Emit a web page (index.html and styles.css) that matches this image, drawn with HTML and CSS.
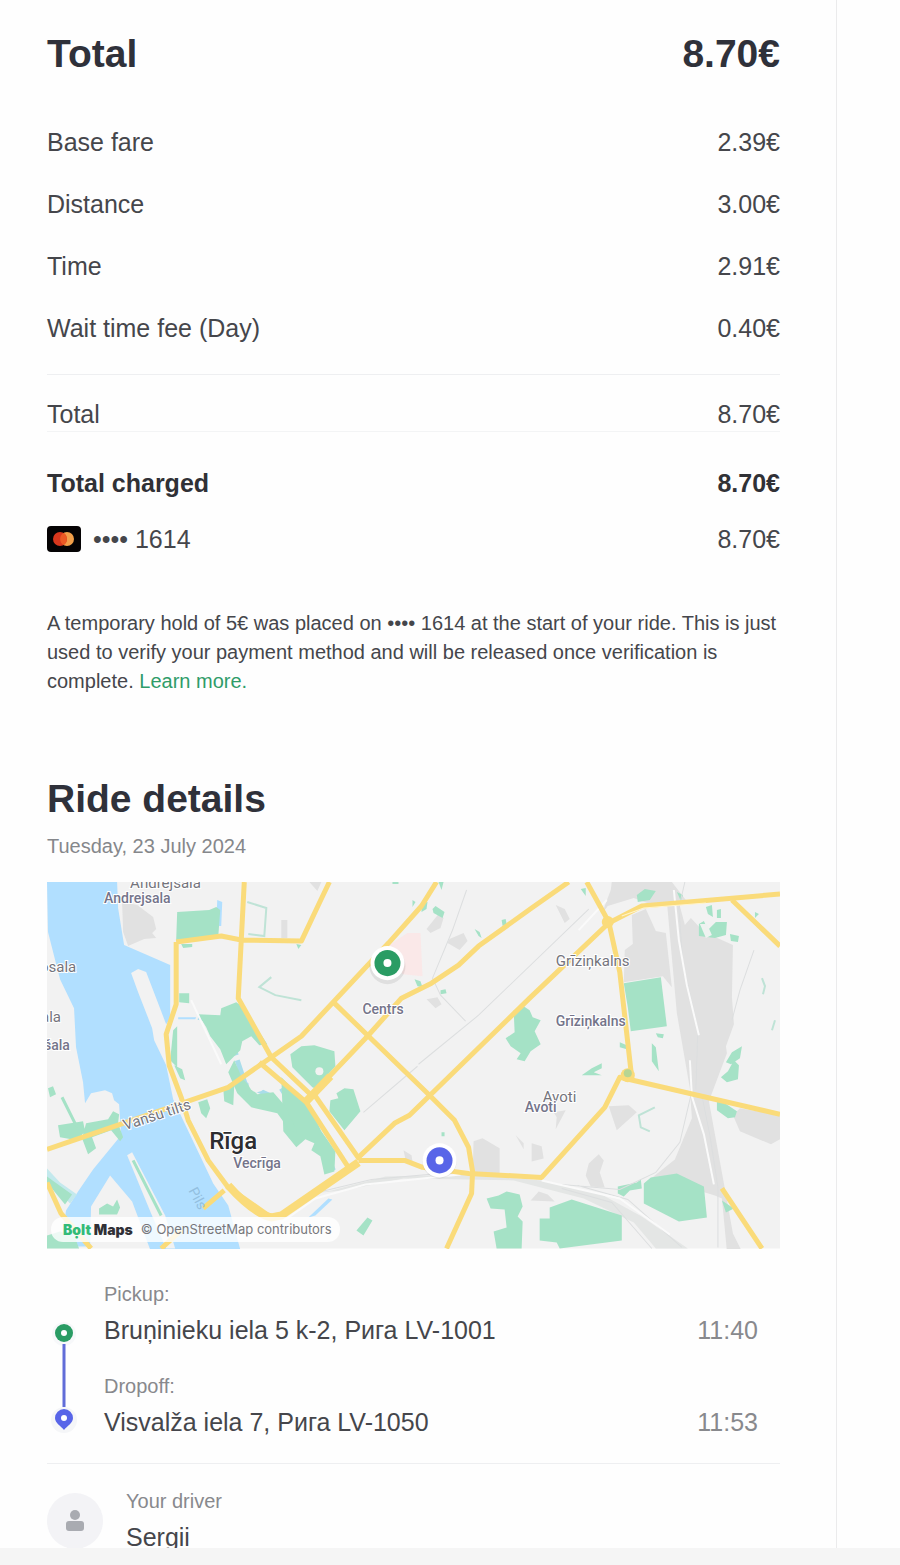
FILE: index.html
```html
<!DOCTYPE html>
<html lang="en">
<head>
    <meta charset="UTF-8">
    <meta name="viewport" content="width=device-width, initial-scale=1.0">
    <title>Ride receipt</title>
    <link rel="stylesheet" href="styles.css">
</head>
<body>
<main class="receipt">
    <header class="total-header">
        <h1>Total</h1>
        <span>8.70€</span>
    </header>

    <table class="fare">
        <tbody>
            <tr><th scope="row">Base fare</th><td>2.39€</td></tr>
            <tr><th scope="row">Distance</th><td>3.00€</td></tr>
            <tr><th scope="row">Time</th><td>2.91€</td></tr>
            <tr><th scope="row">Wait time fee (Day)</th><td>0.40€</td></tr>
        </tbody>
    </table>
    <div class="row subtotal"><span>Total</span><span>8.70€</span></div>
    <div class="row charged"><strong>Total charged</strong><strong>8.70€</strong></div>
    <div class="row">
        <span class="card">
            <svg class="card-logo" viewBox="0 0 34 26" aria-hidden="true">
                <rect width="34" height="26" rx="4" fill="#050304"/>
                <circle cx="20" cy="13" r="7" fill="#f3a04a"/>
                <circle cx="13" cy="13" r="7" fill="#d8371d"/>
                <path d="M16.500 7a7 7 0 0 1 0 12a7 7 0 0 1 0-12z" fill="#ec5a24"/>
            </svg>
            <span>•••• 1614</span>
        </span>
        <span>8.70€</span>
    </div>

    <p class="note">A temporary hold of 5€ was placed on •••• 1614 at the start of your ride. This is just used to verify your payment method and will be released once verification is complete. <a href="#">Learn more.</a></p>

    <h2>Ride details</h2>
    <p class="date">Tuesday, 23 July 2024</p>

    <div class="map">
        <svg viewBox="46 882 732 366" role="img" aria-label="Route map">
            <rect x="46" y="882" width="732" height="366" fill="#f2f2f2"/>

            <!-- rail yards and industrial areas -->
            <g fill="#e1e1e1">
                <path d="M121 902l15 3 16 12 3 12-4 4 4 5-12 1-16 7-5-14z"/>
                <path d="M610 882h60l14 18-36 4-16-6-26 8-6 8 9-24zM630 915l14-6 10 22 10 2 6 54-9-11-39 6 1-32 8-6z"/>
                <path d="M664 890l9-3 10 38 6-7 13 14 29 13-1 52 2 27-8 22 1 7-18 48 15 82 9 50 9 18h-15l-5-53-7-3-49-15-21 3 30-24 17-41-2-30-13-75z"/>
                <path d="M738 1108l40 7v24l-9 5-31-13-7-16zM607 1106l20-1 8 7-20 18zM587 1163l10-9 5 6-4 12 5 15-14-1-5-11zM530 1143l10 3 2 12-12 3zM552 1112l12-2-10 19 1-12zM554 905l9 4 5 10-5 4-6-12z"/>
                <path d="M472 1141l9-3 17 10v25h-27zM425 929l12-15 5 4-3 10-10 5zM448 939l14-6 4 8-8 9-12-7zM425 999l11-2 4 7-6 4zM402 1150l8 5 1 6-7-2zM514 1135l8 8v6zM308 882h12l-4 9zM280 920h6v18h-6zM529 1200l8-9 9 3 7 7z"/>
                <path d="M330 1190l54-14 86-2 70 6 60 14 40 22 46 32h-32l-22-26-50-24-70-18-110-2-60 12-33 3z" fill="#e4e6e5"/>
            </g>
            <path d="M388 945l18-12h13l2 43-20-2z" fill="#fae8e8"/>

            <!-- river and canals -->
            <g fill="#b1dfff">
                <path d="M46 882h70l1 26 6 37 46 20v53l-4 6-20-52-8-3-7 4 7 19 14 36 2 12 12 25 7 34 40 84 15 22 12 44h-90l-18-48-22-26-19 31-1 40H60l5-36 12-19 15-22 28-34-2-31-5-4-2-7-7-3-14 3-6 10-2-21-7-35-2-39-14-29-12-47z"/>
                <path d="M46 1168l13 14 17 12-7 9-14-15-9-8z" fill="#c3e9ed"/>
                <path d="M216 900l5 2-1 24h-5zM177 1017h18l-1 2h-17z"/>
            </g>
            <path d="M197 1017l18 4 15 19 5 15M236 1060l8 24 26 12M280 1088l18 28 22 26 12 28" fill="none" stroke="#a9ddea" stroke-width="5"/>
            <path d="M307 1217l20-19 4 1-17 16z" fill="#b1dfff"/>

            <!-- parks -->
            <g fill="#a5e2c6">
                <path d="M176 912l32-2 7-3 4 3-2 27-42 3zM180 944h11v3l-9 1zM178 993h10v10l-10-1z"/>
                <path d="M197 1014l22 1 1-7 15-6 7 5 24 37-8 1-8-9-9 5-2 9-14 14-6-15-10-13-4-9z"/>
                <path d="M289 1054l11-8 13-1 20 6 1 15-9 10-7 14-7-3-20-20z"/>
                <path d="M335 1093l8-5 9 1 7 22-16 19-15-19 1-11 8-2zM280 1077l18 18 14 19 8 17 14 20-1 20-10 3-4-18-9-6 3-7-9-4-9 8-13-16z"/>
                <path d="M233 1060l8 18 15 16 16-2 12 14 12 26-7-1-13-18-26-6-14-14-9-21zM222 1088l11-3-1 20-9-4zM197 1102l9-3 3 9-4 10-5-5z"/>
                <path d="M172 1030l4-4v41l-7-7zM173 1065l8 4 3 11-5-2z"/>
                <path d="M512 1010l10-4 6 4 3 7 8 3-6 11 6 13-10 7-6 10-8-2 4-6-10-7-5-8 9-6z"/>
                <path d="M622 983l37-6 6 49-36 5-3-24zM642 1183l7-6 26-4 27 13 3 31-28 4-35-18zM548 1207l22-8 50 16v25l-62 8-3-6-17-2v-22h10z"/>
                <path d="M485 1198l12-3 8-4 13 3 3 12-5 10 5 5-1 27h-25l-3-17 13-4-2-18-14-1zM355 1230l11-13 5 3-9 15z"/>
                <path d="M580 1075l10-7 10-5v5l-8 4 8 3zM431 909l3-3 9 6-2 6-9-5zM413 979l6 2 2 6-5-1zM420 903l6-1-1 7-5 3zM439 990l5-1 1 4-6 1zM473 929l5 3 2 6-3-2zM500 920l4-1 1 5-4 2z"/>
                <path d="M697 924l5-3 4 9 8-8h11l-1 13-11 3-16-2zM704 907l6-2 1 12-5-3zM715 910l4-1v9h-4zM635 895l8-6 11 2-6 9-12 2zM579 889l5-1v8zM728 934l9 2-1 6-7-1zM675 892l6 3-2 6zM753 912l4 2-4 4z"/>
                <path d="M616 1186l19-4 4-3 1 9-12 2-6 6-6-3zM715 1101l8 2 12 8-2 6-7 1-11-8zM732 1060l5 5-1 14-11 3-6-5 7-6zM720 1200l12 8-8 4zM724 1062l6-10 10-6-2 12-9 6zM654 1033l8 1-1 4-5-1zM618 1042l7 3v4l-7-2zM650 1043l4 4 3 24-7-10z"/>
                <path d="M57 1125l25-4 2 10-8 9-17-3zM85 1123l22-4 5-8 6 3-1 9 5 14-3 4-9-11-19 7 4 11-8 6-6-16zM47 1088l5-2 3 8-6 3zM46 1176l25 18-7 10-18-22zM98 1208l8-5 6 3 4-7 3 8-3 7H98zM46 1235l13-4 15 6 4 11H46z"/>
                <path d="M437 882h5l-2 8zM391 882h6v2h-6zM411 900l3 2-3 5zM295 944l5 1-3 4zM440 1132h3v4h-3z"/>
            </g>
            <path d="M126 1155l5-3 33 63 10 33h-9l-15-35z" fill="#f2f2f2"/>
            <path d="M132 1160l28 55M61 1097l15 30" fill="none" stroke="#a5e2c6" stroke-width="3"/>
            <circle cx="318" cy="1071" r="4" fill="#f2f2f2"/>
            <ellipse cx="256" cy="1082" rx="9" ry="10" fill="#f2f2f2"/>
            <path d="M698 924l7 0 5 11-6 3z" fill="#eef2f0"/>

            <!-- rails and footpaths -->
            <g fill="none" stroke="#dcdedf" stroke-width="1">
                <path d="M465 890l-14 40-20 48 8 17 25 26M417 1064l60-49 110-106M362 1112l54-46"/>
                <path d="M280 1213l40-22 50-12 90-8M560 1188l50 14 40 46M576 1185l50 14 54 48M560 1184l58 5 36-17 24-30 11-47M700 1095l8 40 8 52v60"/>
                <path d="M752 950l-14 40-8 30M683 882l-6 26 4 55 15 66-2 60"/>
            </g>
            <g fill="none" stroke="#fafafa" stroke-width="2">
                <path d="M280 1222l34-24 50-14 95-10M540 1180l78 18 50 36M688 1060l2 36 12 38 10 50M672 890l5 50 8 45 12 50M605 900l-28 30M190 1000l30 64"/>
            </g>
            <path d="M270 977l-12 10 16 8 26 5M246 902l19 6-2 28-16-2M653 1107l-16 8 2 12 9 4M760 978l3 8-2 8M773 1020l-3 10" fill="none" stroke="#bfe3d6" stroke-width="2"/>

            <!-- main streets -->
            <g fill="none" stroke="#fadb7a" stroke-width="5" stroke-linejoin="round">
                <path d="M175 942v62l-10 30 3 31 12 32 7 23 20 40 20 27 43 30M175 942l45-6 20 4 60 1 17-36 11-23M243 882l-6 116 33 59 40 38"/>
                <path d="M46 1149l181-62 43-30 30-21 87-93 33-37 15-24M567 882l-37 26-53 38-20 19-27 18-30 15-33 37-57 60"/>
                <path d="M333 1003l95 92 25 25 14 27 4 24-1 22-25 55M357 1157l36-34 15-8 120-117 79-75 33-17 138-12M585 882l22 40 11 50 12 106"/>
                <path d="M258 1062l47 40 42 65M312 1093l46 66M357 1160h46l18 7 46 6 73 4 63-70 15-30 160 37M730 900l48 46M720 1188l40 60M46 1182l14 31 30 35M223 1190l-21 18M160 1248l20-18"/>
            </g>
            <path d="M227 1185q25 28 43 32l10-2 77-53" fill="none" stroke="#fadb7a" stroke-width="8"/>
            <path d="M305 1101l24-25" fill="none" stroke="#fadb7a" stroke-width="8"/>
            <circle cx="626" cy="1075" r="7" fill="#fadb7a"/>
            <circle cx="626" cy="1073" r="4" fill="#b7d592"/>
            <circle cx="606" cy="922" r="6" fill="#fadb7a"/>
            <path d="M620 916l22-8 62-5" fill="none" stroke="#fff4cc" stroke-width="1"/>

            <!-- place names -->
            <g class="map-label">
                <text x="129" y="888">Andrejsala</text>
                <text x="554" y="966">Grīziņkalns</text>
                <text x="39" y="972">osala</text>
                <text x="40" y="1022">ala</text>
                <text x="541" y="1102">Avoti</text>
            </g>
            <g class="map-label strong">
                <text x="103" y="903">Andrejsala</text>
                <text x="554" y="1026">Grīziņkalns</text>
                <text x="361" y="1014">Centrs</text>
                <text x="43" y="1050">šala</text>
                <text x="523" y="1112">Avoti</text>
                <text x="232" y="1168">Vecrīga</text>
            </g>
            <text class="map-label" transform="translate(124 1130) rotate(-18)">Vanšu tilts</text>
            <text class="map-water" transform="translate(187 1190) rotate(62)">Pils</text>
            <text class="map-city" x="208" y="1149">Rīga</text>

            <!-- pickup and dropoff markers -->
            <circle cx="386" cy="966" r="18" fill="#000" opacity=".08"/>
            <circle cx="386" cy="963" r="17" fill="#fff"/>
            <circle cx="386" cy="963" r="13" fill="#2a9c64"/>
            <circle cx="386" cy="963" r="4" fill="#fff"/>
            <circle cx="438" cy="1161" r="17" fill="#000" opacity=".08"/>
            <circle cx="438" cy="1160" r="17" fill="#fff"/>
            <circle cx="438" cy="1160" r="13" fill="#5865e8"/>
            <circle cx="438" cy="1160" r="4" fill="#fff"/>
        </svg>
        <div class="attribution">
            <span class="brand"><span class="bolt">Bọlt</span> Maps</span>
            <span>© OpenStreetMap contributors</span>
        </div>
    </div>

    <section class="trip">
        <svg class="route" viewBox="0 0 34 164" aria-hidden="true">
            <circle cx="17" cy="54" r="12" fill="#f7f8fa"/>
            <circle cx="17" cy="53" r="9" fill="#2a9c64"/>
            <circle cx="17" cy="53" r="3" fill="#fff"/>
            <path d="M17 64v63" stroke="#616dd8" stroke-width="3"/>
            <circle cx="17" cy="140" r="13" fill="#f5f6f8"/>
            <path d="M17 150c-3-4-9-7-9-12a9 9 0 0 1 18 0c0 5-6 8-9 12z" fill="#5865e8"/>
            <circle cx="17" cy="138" r="3" fill="#fff"/>
        </svg>
        <div class="stops">
            <div class="stop">
                <div class="label">Pickup:</div>
                <div class="address"><span>Bruņinieku iela 5 k-2, Рига LV-1001</span><time>11:40</time></div>
            </div>
            <div class="stop">
                <div class="label">Dropoff:</div>
                <div class="address"><span>Visvalža iela 7, Рига LV-1050</span><time>11:53</time></div>
            </div>
        </div>
    </section>

    <section class="driver">
        <svg class="avatar" viewBox="0 0 56 56" aria-hidden="true">
            <circle cx="28" cy="28" r="28" fill="#f3f3f6"/>
            <circle cx="28" cy="22" r="5" fill="#a9abb1"/>
            <rect x="19" y="28" width="18" height="10" rx="3" fill="#a9abb1"/>
        </svg>
        <div>
            <div class="label">Your driver</div>
            <div class="address">Sergii</div>
        </div>
    </section>
</main>
<footer class="bottom-bar"></footer>
</body>
</html>
```

FILE: styles.css
```css
* {
    box-sizing: border-box;
}
body {
    margin: 0;
    height: 100vh;
    display: flex;
    flex-direction: column;
    overflow: hidden;
    font-family: "Liberation Sans", Arial, sans-serif;
    font-size: 25px;
    color: #45464b;
    background-color: #fefefe;
}
h1, h2, p {
    margin: 0;
}
.receipt {
    flex: 1;
    min-height: 0;
    overflow: hidden;
    margin-right: 63px;
    padding: 24px 56px 0 47px;
    border-right: 1px solid #ebebec;
}
.total-header {
    display: flex;
    justify-content: space-between;
    margin-bottom: 27px;
    font-size: 39px;
    line-height: 60px;
    font-weight: bold;
    color: #2f313a;
}
.total-header h1 {
    font-size: inherit;
}
.fare {
    width: 100%;
    border-collapse: collapse;
    margin-bottom: 15px;
}
.fare th,
.fare td {
    height: 62px;
    padding: 0;
    text-align: left;
    font-weight: normal;
}
.fare td {
    text-align: right;
}
.row {
    display: flex;
    justify-content: space-between;
    line-height: 56px;
}
.subtotal {
    padding-top: 22px;
    line-height: 34px;
    border-top: 1px solid #eeeff1;
    border-bottom: 1px solid #f3f4f5;
}
.charged {
    margin-top: 23px;
    color: #303136;
}
.card {
    display: flex;
    align-items: center;
    gap: 12px;
}
.card-logo {
    width: 34px;
    height: 26px;
}
.note {
    margin-top: 42px;
    font-size: 20px;
    line-height: 29px;
}
.note a {
    color: #2f9c69;
    text-decoration: none;
}
h2 {
    margin-top: 79px;
    font-size: 39px;
    line-height: 48px;
    color: #2f313a;
}
.date {
    margin: 9px 0 22px;
    font-size: 20px;
    line-height: 28px;
    color: #85878b;
}
.map {
    position: relative;
}
.map svg {
    display: block;
    width: 100%;
}
.map-label {
    font: 15px Roboto, sans-serif;
    fill: #74747c;
    stroke: #fff;
    stroke-width: 2px;
    paint-order: stroke;
}
.strong {
    font-size: 14px;
    font-weight: 500;
    fill: #74748a;
}
.map-water {
    font: 14px Roboto, sans-serif;
    fill: #93bfdf;
}
.map-city {
    font: 500 24px Roboto, sans-serif;
    fill: #2d2d30;
    stroke: #fff;
    stroke-width: 2px;
    paint-order: stroke;
}
.attribution {
    position: absolute;
    left: 4px;
    bottom: 7px;
    display: flex;
    align-items: center;
    gap: 8px;
    padding: 0 8px 0 12px;
    border-radius: 12px;
    background-color: rgba(255, 255, 255, 0.8);
    font: 13px/25px Inter, sans-serif;
    color: #77777b;
}
.brand {
    font: 900 14px/25px Inter, sans-serif;
    color: #303036;
}
.bolt {
    color: #32bb78;
}
.trip {
    display: flex;
    gap: 23px;
    padding: 31px 0 19px;
    border-bottom: 1px solid #eeeff1;
}
.route {
    width: 34px;
    height: 164px;
}
.stops {
    flex: 1;
    display: flex;
    flex-direction: column;
    gap: 20px;
    padding-right: 22px;
}
.label {
    font-size: 20px;
    line-height: 28px;
    color: #88898d;
}
.address {
    display: flex;
    justify-content: space-between;
    line-height: 44px;
}
.address time {
    color: #88898d;
}
.driver {
    display: flex;
    align-items: flex-start;
    gap: 23px;
    padding-top: 23px;
}
.avatar {
    width: 56px;
    height: 56px;
    margin-top: 6px;
}
.bottom-bar {
    height: 17px;
    background-color: #f5f5f5;
}
```
